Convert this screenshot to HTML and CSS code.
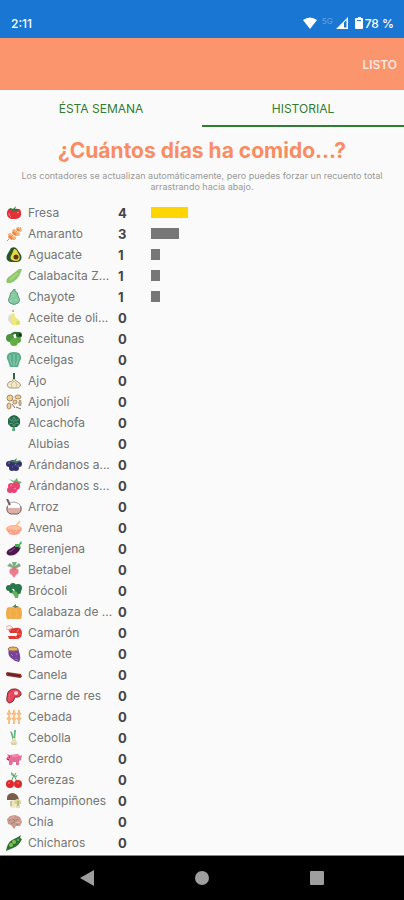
FILE: index.html
```html
<!DOCTYPE html>
<html lang="es">
  <head>
    <meta charset="UTF-8" />
    <meta name="viewport" content="width=device-width, initial-scale=1.0" />
    <title>Historial</title>
    <link rel="stylesheet" href="styles.css" />
  </head>

  <body>
    <div class="status-bar">
      <span class="status-time">2:11</span>
      <div class="status-icons">
        <svg class="wifi" viewBox="0 0 14 12"><path d="M0 3Q7-2 14 3L7 12Z" /></svg>
        <span class="network">5G</span>
        <svg class="signal" viewBox="0 0 12 12"><path d="M0 12L12 0V12ZM8 5.500V10.500H10.500V3Z" fill-rule="evenodd" /></svg>
        <svg class="battery" viewBox="0 0 8 12"><path d="M2 1H3V0H6V1H7Q8 1 8 2V11Q8 12 7 12H1Q0 12 0 11V2Q0 1 1 1ZM2 3V4H6V3Z" fill-rule="evenodd" /></svg>
        <span>78 %</span>
      </div>
    </div>

    <header class="toolbar">
      <button class="done" type="button">LISTO</button>
    </header>

    <nav class="tabs">
      <button class="tab" type="button">ÉSTA SEMANA</button>
      <button class="tab is-active" type="button">HISTORIAL</button>
    </nav>

    <main class="content">
      <h1 class="title">¿Cuántos días ha comido...?</h1>
      <p class="note">Los contadores se actualizan automáticamente, pero puedes forzar un recuento total arrastrando hacia abajo.</p>

      <table class="foods">
        <colgroup>
          <col class="col-icon" />
          <col class="col-name" />
          <col class="col-count" />
          <col />
        </colgroup>
        <tbody>
          <tr>
            <td><svg viewBox="0 0 16 16"><path d="M1 7Q2 3 8 4Q15 3 15 7Q16 13 10 14H5Q0 12 1 7Z" fill="#e5303a" /><path d="M4 3L7 4L10 1L9 4L14 4L10 7L8 5L5 7L6 5L2 5Z" fill="#287b45" /><path d="M3 8Q3 11 5 12M11 8L13 7" stroke="#ff8b86" fill="none" /></svg></td>
            <th scope="row">Fresa</th>
            <td class="count">4</td>
            <td><div class="bar bar-top" style="--days: 4"></div></td>
          </tr>
          <tr>
            <td><svg viewBox="0 0 16 16"><path d="M1 15L15 1" stroke="#d89a60" /><g fill="#f7b26c"><ellipse cx="4" cy="10" rx="2" ry="3" /><ellipse cx="8" cy="6" rx="2" ry="3" /><ellipse cx="12" cy="3" rx="2" ry="2" /><ellipse cx="7" cy="12" rx="3" ry="2" /><ellipse cx="11" cy="8" rx="3" ry="2" /><ellipse cx="14" cy="4" rx="2" ry="2" /></g><path d="M3 10L6 13M7 6L10 9M11 3L13 5" stroke="#ee7e51" stroke-width="2" /></svg></td>
            <th scope="row">Amaranto</th>
            <td class="count">3</td>
            <td><div class="bar" style="--days: 3"></div></td>
          </tr>
          <tr>
            <td><svg viewBox="0 0 16 16"><path d="M5 1Q9-1 11 2L15 8Q17 14 11 15H5Q-1 14 1 8Z" fill="#28552b" /><path d="M8 2Q11 2 12 6Q15 10 13 13Q10 15 6 13Q3 11 6 7Z" fill="#e9d83e" /><circle cx="10" cy="10" r="2.500" fill="#5c3420" /></svg></td>
            <th scope="row">Aguacate</th>
            <td class="count">1</td>
            <td><div class="bar" style="--days: 1"></div></td>
          </tr>
          <tr>
            <td><svg viewBox="0 0 16 16"><path d="M1 15Q-1 11 4 8L13 1L16 1L15 4Q12 12 5 15Z" fill="#8fc66b" /><path d="M4 12L12 5" stroke="#a5d582" stroke-width="2" /></svg></td>
            <th scope="row">Calabacita Z...</th>
            <td class="count">1</td>
            <td><div class="bar" style="--days: 1"></div></td>
          </tr>
          <tr>
            <td><svg viewBox="0 0 16 16"><path d="M7 1L9 0L9 2Q12 3 12 7Q15 12 12 14Q8 17 4 14Q1 12 4 7Q4 3 7 2Z" fill="#86c8a0" stroke="#5a9b78" stroke-width="1" /><path d="M7 5V8M5 11V13M10 10V12" stroke="#a5d9b8" /></svg></td>
            <th scope="row">Chayote</th>
            <td class="count">1</td>
            <td><div class="bar" style="--days: 1"></div></td>
          </tr>
          <tr>
            <td><svg viewBox="0 0 16 16"><path d="M6 0H8V2H6Z" fill="#dba3a3" /><path d="M5 4L8 3L9 7L14 11L12 15H6L3 9Z" fill="#eee779" /><path d="M3 4L6 9L5 14L2 10Z" fill="#ded9d7" /><circle cx="12" cy="13" r="2" fill="#d4dd72" /></svg></td>
            <th scope="row">Aceite de oli...</th>
            <td class="count">0</td>
            <td></td>
          </tr>
          <tr>
            <td><svg viewBox="0 0 16 16"><path d="M4 5Q8 0 13 3" stroke="#377437" stroke-width="2" fill="none" /><circle cx="4" cy="7" r="4" fill="#4d963e" /><circle cx="13" cy="4" r="3" fill="#245f2c" /><circle cx="12" cy="9" r="3" fill="#5aaa43" /><circle cx="8" cy="11" r="4" fill="#63ac46" /><circle cx="14" cy="4" r="1" fill="#171f19" /></svg></td>
            <th scope="row">Aceitunas</th>
            <td class="count">0</td>
            <td></td>
          </tr>
          <tr>
            <td><svg viewBox="0 0 16 16"><path d="M3 1Q8-1 13 1Q17 5 14 9L12 15H4L2 9Q-1 4 3 1Z" fill="#5bae8b" /><path d="M8 2V14M4 3Q3 8 6 13M12 3Q13 8 10 13" stroke="#94cfb2" fill="none" /></svg></td>
            <th scope="row">Acelgas</th>
            <td class="count">0</td>
            <td></td>
          </tr>
          <tr>
            <td><svg viewBox="0 0 16 16"><path d="M8 5Q7 9 3 9Q-1 13 4 15H12Q17 12 12 9Q9 8 8 5Z" fill="#f0e8c9" stroke="#a59c7c" /><path d="M8 0V6" stroke="#35633a" stroke-width="2" /><path d="M8 8Q3 12 7 15M8 8Q13 12 9 15" stroke="#c8bf98" fill="none" /></svg></td>
            <th scope="row">Ajo</th>
            <td class="count">0</td>
            <td></td>
          </tr>
          <tr>
            <td><svg viewBox="0 0 16 16"><g fill="#f2cf8e" stroke="#a98a68" stroke-width="1"><ellipse cx="4" cy="4" rx="3" ry="3" /><ellipse cx="12" cy="3" rx="3" ry="2" /><ellipse cx="9" cy="8" rx="2" ry="2" /><ellipse cx="3" cy="12" rx="2" ry="3" /><ellipse cx="14" cy="9" rx="1" ry="3" /></g><path d="M6 10L9 14M10 13L15 15M7 5L5 7" stroke="#85776a" /></svg></td>
            <th scope="row">Ajonjolí</th>
            <td class="count">0</td>
            <td></td>
          </tr>
          <tr>
            <td><svg viewBox="0 0 16 16"><path d="M7 10H9V16H6Z" fill="#5ca875" /><path d="M8 0L11 1L14 4L14 9L11 12H5L2 9V4L5 1Z" fill="#25694c" /><path d="M3 4L6 6L8 2L10 6L13 4M3 9L6 8L8 11L10 8L13 9M8 5V8" stroke="#5f9f78" fill="none" /></svg></td>
            <th scope="row">Alcachofa</th>
            <td class="count">0</td>
            <td></td>
          </tr>
          <tr>
            <td></td>
            <th scope="row">Alubias</th>
            <td class="count">0</td>
            <td></td>
          </tr>
          <tr>
            <td><svg viewBox="0 0 16 16"><g fill="#35336d"><circle cx="3" cy="7" r="3" /><circle cx="7" cy="6" r="3" /><circle cx="13" cy="7" r="3" /><circle cx="6" cy="11" r="3" /><circle cx="10" cy="11" r="3" /></g><path d="M3 3L7 4L11 1L10 4L15 3L11 6L6 5Z" fill="#4b8756" /><path d="M2 6H4M6 10H7M11 9H13" stroke="#7376b5" /></svg></td>
            <th scope="row">Arándanos a...</th>
            <td class="count">0</td>
            <td></td>
          </tr>
          <tr>
            <td><svg viewBox="0 0 16 16"><path d="M3 1L8 3L11 0L12 3L16 4L12 7L8 5Z" fill="#5fb766" /><g fill="#e84372"><circle cx="5" cy="8" r="3" /><circle cx="10" cy="8" r="4" /><circle cx="4" cy="12" r="3" /><circle cx="8" cy="12" r="3" /></g><path d="M4 8L6 7M8 11L10 10" stroke="#ff8baa" /></svg></td>
            <th scope="row">Arándanos s...</th>
            <td class="count">0</td>
            <td></td>
          </tr>
          <tr>
            <td><svg viewBox="0 0 16 16"><path d="M1 8Q3 3 8 3Q14 4 15 8Z" fill="#fff" stroke="#aaa0a1" /><path d="M1 8H15Q16 14 11 15H5Q0 14 1 8Z" fill="#ddb0a7" stroke="#746061" /><path d="M1 0L4 6" stroke="#725d5b" stroke-width="2" /><path d="M2 8H14" stroke="#fff" stroke-width="2" /></svg></td>
            <th scope="row">Arroz</th>
            <td class="count">0</td>
            <td></td>
          </tr>
          <tr>
            <td><svg viewBox="0 0 16 16"><path d="M10 6L14 1" stroke="#ffc58b" stroke-width="2" /><ellipse cx="8" cy="9" rx="8" ry="4" fill="#ffac8b" /><path d="M1 10Q2 15 8 15Q14 15 15 10Z" fill="#f9a088" /><ellipse cx="8" cy="8" rx="6" ry="2" fill="#ffc09c" /><path d="M4 12L6 13M9 12L11 11" stroke="#ffd0b4" /></svg></td>
            <th scope="row">Avena</th>
            <td class="count">0</td>
            <td></td>
          </tr>
          <tr>
            <td><svg viewBox="0 0 16 16"><path d="M11 3Q16 5 13 10Q8 16 2 14Q-1 12 2 9L7 6Z" fill="#4e174f" /><path d="M9 3L13 3L15 0L16 2L14 4L15 8L12 6L9 6Z" fill="#48ad55" /><path d="M3 11Q6 10 9 7" stroke="#924d8d" fill="none" /></svg></td>
            <th scope="row">Berenjena</th>
            <td class="count">0</td>
            <td></td>
          </tr>
          <tr>
            <td><svg viewBox="0 0 16 16"><path d="M7 6L1 4L4 1L7 4L6 0H11L9 4L13 1L15 4L9 7Z" fill="#80ad80" /><path d="M4 7Q8 5 12 7Q14 11 10 13L8 16L6 13Q2 11 4 7Z" fill="#ef7d8d" /><path d="M7 5V9M9 5V8" stroke="#c76c78" /></svg></td>
            <th scope="row">Betabel</th>
            <td class="count">0</td>
            <td></td>
          </tr>
          <tr>
            <td><svg viewBox="0 0 16 16"><path d="M7 8L10 7L13 10L12 15H9L8 12L4 9Z" fill="#68af61" /><g fill="#27774a"><circle cx="3" cy="5" r="3" /><circle cx="7" cy="3" r="3" /><circle cx="12" cy="5" r="4" /><circle cx="5" cy="8" r="2" /><circle cx="13" cy="9" r="2" /></g></svg></td>
            <th scope="row">Brócoli</th>
            <td class="count">0</td>
            <td></td>
          </tr>
          <tr>
            <td><svg viewBox="0 0 16 16"><path d="M1 4Q4 2 8 4Q13 2 15 4Q17 10 15 15H1Q-1 10 1 4Z" fill="#f2ac47" /><path d="M6 3L10 0L10 2L13 2L10 4Z" fill="#638159" /><path d="M5 5Q3 10 5 14M10 5Q12 10 10 14" stroke="#f6b85a" fill="none" /></svg></td>
            <th scope="row">Calabaza de ...</th>
            <td class="count">0</td>
            <td></td>
          </tr>
          <tr>
            <td><svg viewBox="0 0 16 16"><path d="M2 4L9 3Q16 2 16 8Q16 14 10 14L3 14L2 11H9Q12 11 11 8L4 8Z" fill="#dc3a35" /><path d="M0 2Q4-1 7 3M0 4L5 5" stroke="#f2a69a" fill="none" /><path d="M13 4L11 7M15 9H11M11 13L9 11" stroke="#f46f60" /></svg></td>
            <th scope="row">Camarón</th>
            <td class="count">0</td>
            <td></td>
          </tr>
          <tr>
            <td><svg viewBox="0 0 16 16"><path d="M3 2H12L14 9Q15 13 13 16Q8 15 5 12Q1 9 3 2Z" fill="#76439a" /><ellipse cx="7" cy="3" rx="5" ry="2" fill="#e7b852" stroke="#a16c6c" /><path d="M5 8L7 10M10 7L11 9M9 13L12 14" stroke="#a873bd" /></svg></td>
            <th scope="row">Camote</th>
            <td class="count">0</td>
            <td></td>
          </tr>
          <tr>
            <td><svg viewBox="0 0 16 16"><path d="M1 5L15 7L16 10L14 11L1 9Q-1 7 1 5Z" fill="#8e2f2b" /><path d="M2 7L14 9" stroke="#4e1b1c" /></svg></td>
            <th scope="row">Canela</th>
            <td class="count">0</td>
            <td></td>
          </tr>
          <tr>
            <td><svg viewBox="0 0 16 16"><path d="M2 4Q5 0 10 1Q16 3 15 7Q13 10 9 9Q8 14 4 15Q0 15 1 9Z" fill="#e4465b" stroke="#822c3a" /><circle cx="10" cy="5" r="2" fill="#ffd3ce" /><path d="M4 5Q3 8 3 12" stroke="#f0616f" fill="none" /></svg></td>
            <th scope="row">Carne de res</th>
            <td class="count">0</td>
            <td></td>
          </tr>
          <tr>
            <td><svg viewBox="0 0 16 16"><g stroke="#f6bd84" stroke-width="2" fill="none"><path d="M3 1V15M8 1V15M13 1V15M1 4L3 6L5 4M1 9L3 11L5 9M6 4L8 6L10 4M6 9L8 11L10 9M11 4L13 6L15 4M11 9L13 11L15 9" /></g></svg></td>
            <th scope="row">Cebada</th>
            <td class="count">0</td>
            <td></td>
          </tr>
          <tr>
            <td><svg viewBox="0 0 16 16"><path d="M7 11L4 1L6 2L8 7V0H10L9 11Z" fill="#67b786" /><path d="M7 8H9L10 11Q13 13 10 15H6Q3 13 6 11Z" fill="#e4dfb7" /><path d="M6 13L7 15M9 13V15" stroke="#c4ba98" /></svg></td>
            <th scope="row">Cebolla</th>
            <td class="count">0</td>
            <td></td>
          </tr>
          <tr>
            <td><svg viewBox="0 0 16 16"><path d="M1 3L4 4L12 3L14 5L16 4L15 9L13 10L13 14H10V11H7L6 14H3V10L0 8L2 5Z" fill="#e56e96" /><path d="M3 6H4M1 8L3 9" stroke="#70324d" /><path d="M6 5L12 5" stroke="#f48bab" stroke-width="2" /></svg></td>
            <th scope="row">Cerdo</th>
            <td class="count">0</td>
            <td></td>
          </tr>
          <tr>
            <td><svg viewBox="0 0 16 16"><path d="M5 10L8 3L11 10M5 1L8 4L10 1" stroke="#49a36d" fill="none" /><path d="M5 0L8 2L7 4L5 3ZM8 4L12 3L10 6Z" fill="#76bd7d" /><circle cx="4" cy="12" r="4" fill="#df292f" /><circle cx="12" cy="12" r="4" fill="#df292f" /><path d="M2 11H4M11 11H13" stroke="#ff7a75" /></svg></td>
            <th scope="row">Cerezas</th>
            <td class="count">0</td>
            <td></td>
          </tr>
          <tr>
            <td><svg viewBox="0 0 16 16"><path d="M5 7H9L10 14Q7 16 4 14Z" fill="#eee8c2" /><path d="M1 7Q0 1 6 0Q12 0 13 7Z" fill="#795c4c" /><path d="M10 11H14V15H10Z" fill="#e2dfab" /><path d="M8 11Q8 6 12 6Q16 7 15 11Z" fill="#d9d59a" /><path d="M5 8V13M12 8V13" stroke="#9f9a6b" /></svg></td>
            <th scope="row">Champiñones</th>
            <td class="count">0</td>
            <td></td>
          </tr>
          <tr>
            <td><svg viewBox="0 0 16 16"><path d="M1 5L4 2L9 1L14 3L16 8L14 12L10 12L8 15L5 11L2 10Z" fill="#c99a8d" /><path d="M3 7L6 4L9 7L12 5M5 10L8 8L12 11" stroke="#a67c75" fill="none" /><path d="M4 5L8 3M9 9L14 8" stroke="#e3bcae" /></svg></td>
            <th scope="row">Chía</th>
            <td class="count">0</td>
            <td></td>
          </tr>
          <tr>
            <td><svg viewBox="0 0 16 16"><path d="M0 16Q1 8 6 5L12 2L15 0L14 3L16 4Q13 11 7 13Z" fill="#2e7137" /><g fill="#7fc250"><circle cx="5" cy="10" r="2" /><circle cx="8" cy="7" r="2" /><circle cx="12" cy="5" r="1" /></g></svg></td>
            <th scope="row">Chícharos</th>
            <td class="count">0</td>
            <td></td>
          </tr>
        </tbody>
      </table>
    </main>

    <footer class="nav-bar">
      <button type="button" aria-label="Atrás"><svg viewBox="0 0 16 16"><path d="M1 8L15 0V16Z" /></svg></button>
      <button type="button" aria-label="Inicio"><svg viewBox="0 0 16 16"><circle cx="8" cy="8" r="7" /></svg></button>
      <button type="button" aria-label="Recientes"><svg viewBox="0 0 16 16"><rect x="1" y="1" width="14" height="14" rx="1" /></svg></button>
    </footer>
  </body>
</html>
```
FILE: styles.css
```css
:root {
  --blue: #1976d2;
  --orange: #fb956d;
  --green: #2e7d32;
  --grey: #777777;
}

* {
  box-sizing: border-box;
  margin: 0;
  padding: 0;
}

body {
  background-color: #fafafa;
  color: #757575;
  display: flex;
  flex-direction: column;
  font-family: Inter, "Open Sans", sans-serif;
  font-size: 12px;
  min-height: 100vh;
}

button {
  background: none;
  border: none;
  cursor: pointer;
  font: inherit;
}

.status-bar {
  align-items: center;
  background-color: var(--blue);
  color: white;
  display: flex;
  font-weight: 500;
  height: 38px;
  justify-content: space-between;
  padding: 8px 10px 0 11px;
}

.status-icons {
  align-items: center;
  display: flex;
}

.status-icons svg {
  fill: white;
  height: 12px;
}

.wifi {
  width: 14px;
}

.network {
  align-self: flex-start;
  color: #5d9fe0;
  font-size: 8px;
  margin: 0 3px 0 5px;
}

.signal {
  margin-right: 7px;
  width: 12px;
}

.battery {
  margin-right: 2px;
  width: 8px;
}

.toolbar {
  align-items: center;
  background-color: var(--orange);
  display: flex;
  height: 52px;
  justify-content: flex-end;
  padding-right: 7px;
}

.done {
  color: #fff0ea;
  font-weight: 500;
}

.tabs {
  display: flex;
  height: 37px;
}

.tab {
  border-bottom: 2px solid transparent;
  color: var(--green);
  flex: 1;
  padding-top: 2px;
}

.tab.is-active {
  border-color: var(--green);
}

.content {
  border-bottom: 2px solid white;
  flex: 1;
}

.title {
  color: #f98c63;
  font-size: 21px;
  font-weight: 700;
  line-height: 26px;
  padding-top: 11px;
  text-align: center;
}

.note {
  color: #999999;
  font-size: 9px;
  line-height: 11px;
  padding: 6px 16px 10px;
  text-align: center;
}

.foods {
  border-collapse: collapse;
  table-layout: fixed;
  width: 100%;
}

.col-icon {
  width: 28px;
}

.col-name {
  width: 90px;
}

.col-count {
  width: 33px;
}

.foods tr {
  height: 21px;
}

.foods th {
  font-weight: 400;
  text-align: left;
  white-space: nowrap;
}

.foods svg {
  display: block;
  height: 16px;
  margin-left: 6px;
  width: 16px;
}

.count {
  color: #444444;
  font-size: 13px;
  font-weight: 700;
}

/* one step per day eaten */
.bar {
  background-color: var(--grey);
  height: 11px;
  width: calc(var(--days) * 3.65%);
}

.bar-top {
  background-color: #ffd500;
}

.nav-bar {
  align-items: center;
  background-color: black;
  border-top: 1px solid #888888;
  display: flex;
  height: 45px;
  justify-content: center;
  gap: 99px;
}

.nav-bar svg {
  display: block;
  fill: #9e9e9e;
  height: 16px;
  width: 16px;
}
```
